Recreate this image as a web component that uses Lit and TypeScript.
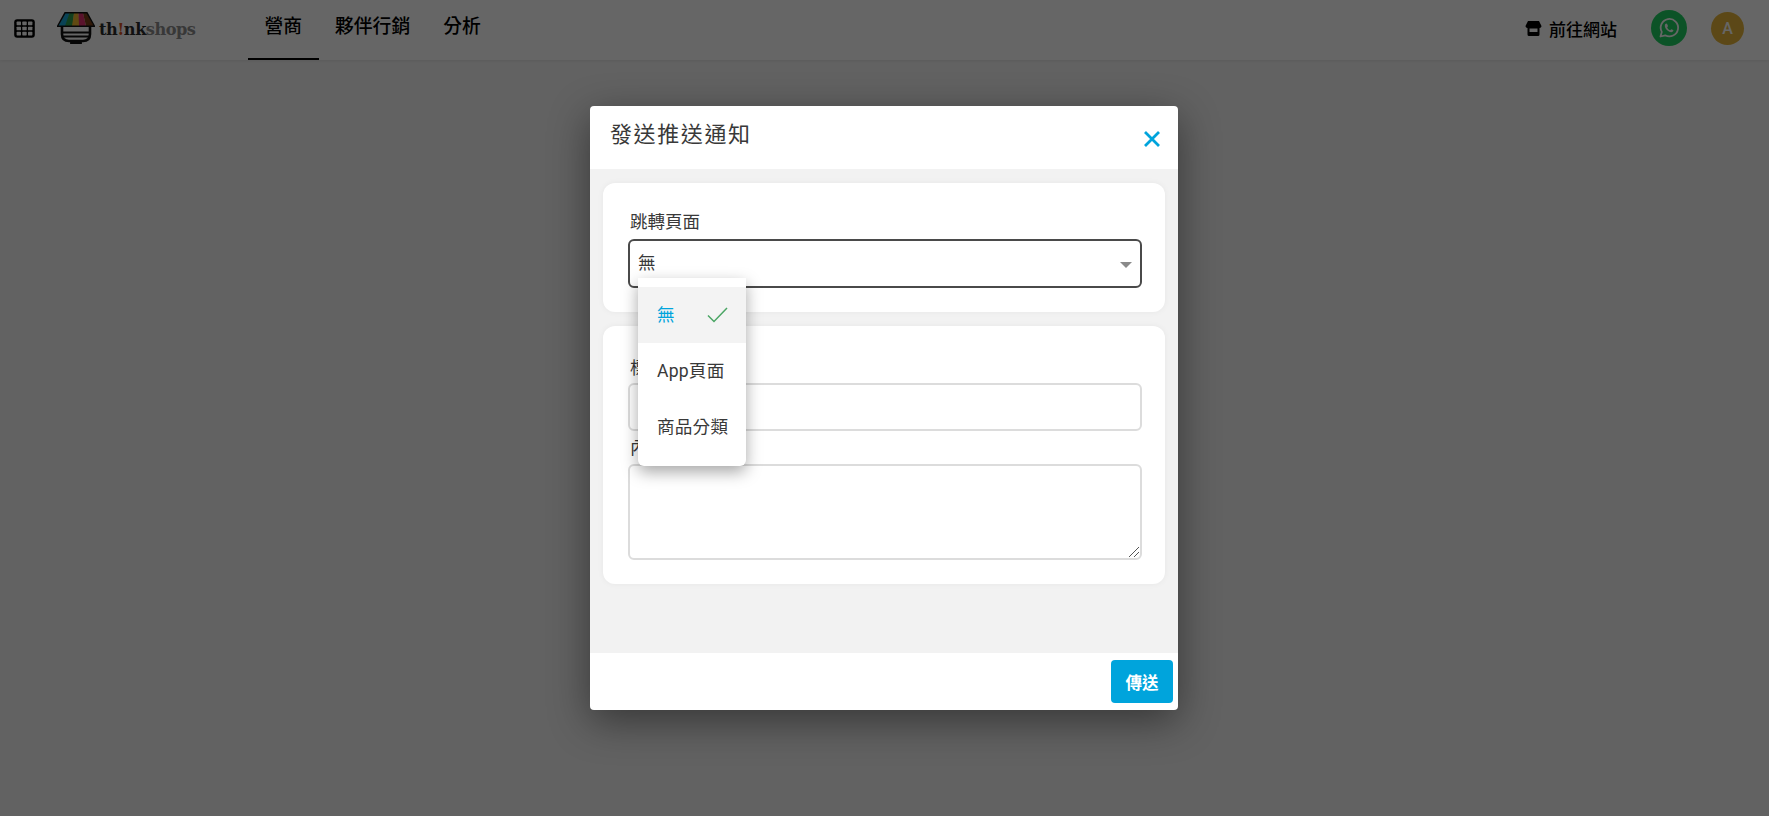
import { LitElement, html, css } from "lit";
import { customElement } from "lit/decorators.js";

@customElement("app-root")
export class AppRoot extends LitElement {
  static styles = css`
    :host {
      display: block;
      position: relative;
      width: 100%;
      height: 816px;
      overflow: hidden;
      background: #f5f5f5;
      font-family: Roboto, "Noto Sans CJK TC", sans-serif;
      color: #393939;
    }
    .top {
      height: 60px;
      background: #fff;
      box-shadow: 0 1px 3px rgba(0,0,0,.08);
      display: flex;
      align-items: center;
      padding: 0 25px 4px 13px;
      box-sizing: border-box;
      color: #000;
    }
    .grid { width: 23px; height: 23px; display: block; }
    .logo { display: flex; align-items: center; margin-left: 21px; width: 191px; }
    .logo svg { display: block; }
    .logotext {
      font-family: "DejaVu Serif", serif;
      font-size: 16.2px;
      font-weight: 700;
      letter-spacing: -0.5px;
      color: #2b2b2b;
      margin: 3px 0 0 4px;
    }
    .logotext b { color: #d9541e; }
    .logotext span { color: #8c8c8c; }
    nav { display: flex; height: 60px; align-self: flex-start; }
    nav a {
      display: flex;
      align-items: center;
      padding: 0 16.5px 10px;
      box-sizing: border-box;
      font-size: 18.8px;
      font-weight: 500;
      border-bottom: 2px solid transparent;
    }
    nav a.on { border-bottom-color: #000; }
    .right { margin-left: auto; display: flex; align-items: center; }
    .go { display: flex; align-items: center; gap: 7px; font-size: 17px; font-weight: 500; margin-right: 34px; }
    .wa { width: 36px; height: 36px; border-radius: 50%; background: #1fd061; display: grid; place-items: center; margin-right: 24px; }
    .av { width: 33px; height: 33px; border-radius: 50%; background: #e6b53a; color: #fff; display: grid; place-items: center; font-size: 16px; font-weight: 500; }
    .overlay {
      position: absolute;
      inset: 0;
      padding-right: 1px;
      background: rgba(0,0,0,.6);
      display: flex;
      align-items: center;
      justify-content: center;
    }
    .modal {
      width: 588px;
      height: 604px;
      background: #fff;
      border-radius: 4px;
      box-shadow: 0 11px 40px rgba(0,0,0,.45);
      display: flex;
      flex-direction: column;
      overflow: hidden;
    }
    .head {
      height: 63px;
      flex: none;
      display: flex;
      justify-content: space-between;
      padding: 14px 18px 0 20px;
      box-sizing: border-box;
      font-size: 22px;
      line-height: 30px;
      letter-spacing: 1.6px;
      color: #393939;
    }
    .head svg { margin-top: 11px; }
    .body {
      flex: 1;
      background: #f2f2f2;
      padding: 14px 13px 0 13px;
      display: flex;
      flex-direction: column;
      gap: 14px;
    }
    .card {
      background: #fff;
      border-radius: 12px;
      box-shadow: 0 0 6px rgba(0,0,0,.05);
      padding: 27px 23px 0 25px;
      box-sizing: border-box;
    }
    .c1 { height: 129px; position: relative; }
    .c2 { height: 258px; padding-top: 30px; }
    label { display: block; font-size: 17.5px; line-height: 24px; color: #393939; padding: 0 0 0 2px; box-sizing: border-box; height: 24px; }
    .sel {
      margin-top: 5px;
      height: 49px;
      border: 2px solid #4a4a4a;
      border-radius: 6px;
      box-sizing: border-box;
      display: flex;
      align-items: center;
      justify-content: space-between;
      padding: 0 8px 4px 8px;
      font-size: 17.5px;
      color: #393939;
    }
    .caret { width: 0; height: 0; border-left: 6px solid transparent; border-right: 6px solid transparent; border-top: 6px solid #8a8a8a; margin-top: 6px; }
    .inp { margin-top: 3px; height: 48px; border: 2px solid #dcdcdc; border-radius: 6px; box-sizing: border-box; margin-bottom: 5px; }
    .ta { margin-top: 4px; height: 96px; border: 2px solid #dcdcdc; border-radius: 6px; box-sizing: border-box; position: relative; }
    .grip { position: absolute; right: 0; bottom: 0; display: block; }
    .foot {
      height: 57px;
      flex: none;
      display: flex;
      justify-content: flex-end;
      align-items: flex-start;
      padding: 7px 5px 0 0;
      box-sizing: border-box;
    }
    .btn {
      width: 62px;
      height: 43px;
      background: #00a4dc;
      color: #fff;
      border-radius: 4px;
      display: grid;
      place-items: center;
      font-size: 16.5px;
      font-weight: 700;
    }
    .menu {
      position: absolute;
      left: 35px;
      top: 95px;
      width: 108px;
      height: 188px;
      padding: 9px 0;
      box-sizing: border-box;
      background: #fff;
      border-radius: 0 0 6px 6px;
      box-shadow: 0 6px 16px rgba(0,0,0,.35);
      z-index: 2;
    }
    .it {
      height: 56px;
      display: flex;
      align-items: center;
      justify-content: space-between;
      padding: 0 18px 4px 19px;
      box-sizing: border-box;
      font-size: 17.6px;
      letter-spacing: .2px;
      white-space: nowrap;
      color: #393939;
    }
    .it.on { background: #f3f3f3; color: #00a4dc; }
    .it svg { margin-top: 4px; }
    .it span { display: block; }
  `;

  render() {
    return html`
      <div class="top">
        <svg class="grid" viewBox="0 0 23 23">
          <rect x="1.2" y="2.2" width="20.6" height="18.6" rx="3" fill="#000"/>
          <g fill="#fff">
            <rect x="3.6" y="4.6" width="4.4" height="3.6" rx=".6"/><rect x="9.3" y="4.6" width="4.4" height="3.6" rx=".6"/><rect x="15" y="4.6" width="4.4" height="3.6" rx=".6"/>
            <rect x="3.6" y="9.7" width="4.4" height="3.6" rx=".6"/><rect x="9.3" y="9.7" width="4.4" height="3.6" rx=".6"/><rect x="15" y="9.7" width="4.4" height="3.6" rx=".6"/>
            <rect x="3.6" y="14.8" width="4.4" height="3.6" rx=".6"/><rect x="9.3" y="14.8" width="4.4" height="3.6" rx=".6"/><rect x="15" y="14.8" width="4.4" height="3.6" rx=".6"/>
          </g>
        </svg>
        <div class="logo">
          <svg width="38" height="32" viewBox="0 0 38 32">
            <path d="M5 14v8c0 5 3 7 7 7h14c4 0 7-2 7-7v-8" fill="none" stroke="#111" stroke-width="2.6"/>
            <path d="M5 20.5h28M6 24.5h26" stroke="#111" stroke-width="1.8"/>
            <path d="M14 29v2h10v-2" fill="none" stroke="#111" stroke-width="1.8"/>
            <path d="M8 1h4.5L10 14H1z" fill="#19a9d8"/>
            <path d="M12.5 1H17l-1 13H8z" fill="#2e9e4c"/>
            <path d="M17 1h4.5l1 13H15z" fill="#f0b72d"/>
            <path d="M21.5 1H26l3 13H22z" fill="#e1316f"/>
            <path d="M26 1h4l7 13H29z" fill="#7c3f17"/>
            <path d="M8 .8h22l7.5 13.4H.5z" fill="none" stroke="#111" stroke-width="1.4"/>
          </svg>
          <div class="logotext">th<b>!</b>nk<span>shops</span></div>
        </div>
        <nav>
          <a class="on">營商</a>
          <a>夥伴行銷</a>
          <a>分析</a>
        </nav>
        <div class="right">
          <div class="go">
            <svg width="17" height="17" viewBox="0 0 17 17"><path d="M3 1h11l2.5 5c0 1.2-1 2-2 2v6.5a1.5 1.5 0 0 1-1.5 1.5H4a1.5 1.5 0 0 1-1.5-1.5V8c-1 0-2-.8-2-2z" fill="#000"/><rect x="4.5" y="8.5" width="8" height="3.5" fill="#fff"/></svg>
            前往網站
          </div>
          <div class="wa">
            <svg width="24" height="24" viewBox="0 0 24 24"><path d="M3.5 20.5l1.3-4.600A8.700 8.700 0 1 1 8.200 19.300z" fill="none" stroke="#fff" stroke-width="1.8" stroke-linejoin="round"/><path d="M9.2 7.6c-.5 0-1.400.8-1.400 2.200 0 2.800 3.500 6.300 6.400 6.500 1.300 0 2.300-1 2.300-1.700 0-.5-1.700-1.500-2.200-1.400-.4.100-.7 1-1.100 1-1 0-2.900-1.900-3-2.800 0-.4.700-.8.800-1.200 0-.5-1-2.600-1.800-2.600z" fill="#fff"/></svg>
          </div>
          <div class="av">A</div>
        </div>
      </div>
      <div class="overlay">
        <div class="modal">
          <div class="head">
            <div>發送推送通知</div>
            <svg width="16" height="16" viewBox="0 0 16 16"><path d="M1 1l14 14M15 1L1 15" stroke="#00a4dc" stroke-width="2.8" fill="none"/></svg>
          </div>
          <div class="body">
            <div class="card c1">
              <label>跳轉頁面</label>
              <div class="sel"><span>無</span><i class="caret"></i></div>
              <div class="menu">
                <div class="it on"><span>無</span>
                  <svg width="21" height="16" viewBox="0 0 21 16"><path d="M1 8.500l6 6L20 1" fill="none" stroke="#4aa564" stroke-width="1.5"/></svg>
                </div>
                <div class="it">App頁面</div>
                <div class="it">商品分類</div>
              </div>
            </div>
            <div class="card c2">
              <label>標題</label>
              <div class="inp"></div>
              <label>內文</label>
              <div class="ta">
                <svg class="grip" width="12" height="12" viewBox="0 0 12 12"><path d="M1 11L11 1M6 11l5-5" stroke="#555" stroke-width="1" fill="none"/></svg>
              </div>
            </div>
          </div>
          <div class="foot"><div class="btn">傳送</div></div>
        </div>
      </div>
    `;
  }
}
